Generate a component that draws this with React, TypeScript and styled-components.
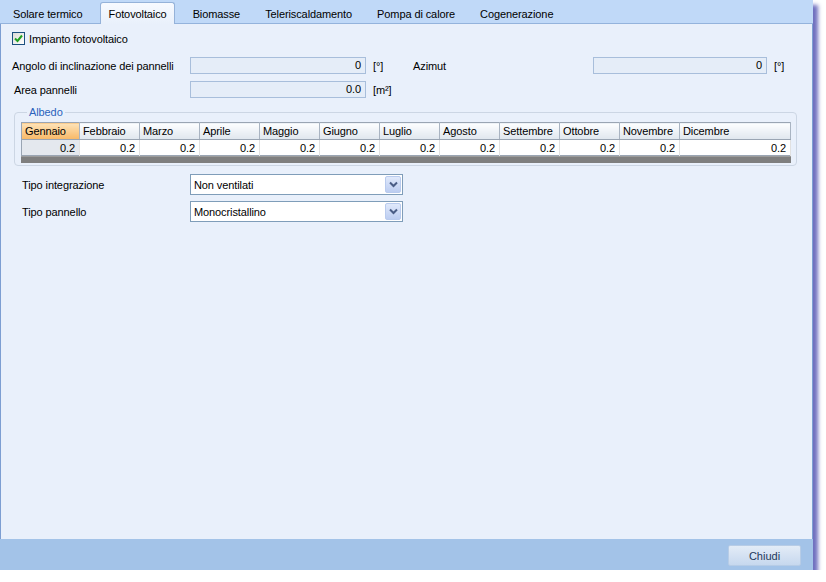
import React from "react";
import styled, { createGlobalStyle, css } from "styled-components";

const GlobalStyle = createGlobalStyle`
  body {
    margin: 0;
    background: #ffffff;
    font-family: "Liberation Sans", Arial, sans-serif;
    font-size: 11px;
    letter-spacing: -0.1px;
    color: #000;
  }
`;

const Window = styled.div`
  width: 813px;
  height: 570px;
  display: flex;
  flex-direction: column;
  box-shadow: 5px 5px 4px rgba(96, 96, 184, 0.9);
`;

const TabStrip = styled.div`
  height: 23px;
  display: flex;
  align-items: flex-end;
  background: #c0d9f8;
  border-bottom: 1px solid #94b3dc;
`;

const Tab = styled.div<{ $active?: boolean }>`
  height: 21px;
  padding: 0 12px 0 13px;
  display: flex;
  align-items: center;
  margin-bottom: -1px;
  white-space: nowrap;
  ${(p) =>
    p.$active &&
    css`
      margin: 0 5px -1px;
      padding: 0 7px 0 8px;
      background: linear-gradient(#f7faff, #e9f0fb);
      border: 1px solid #95b2d9;
      border-bottom: none;
      border-radius: 3px 3px 0 0;
    `}
`;

const Content = styled.div`
  flex: 1;
  background: #e9f0fb;
  border-left: 1px solid #7d9ed2;
  border-right: 1px solid #7d9ed2;
  padding-top: 8px;
  display: flex;
  flex-direction: column;
`;

const CheckRow = styled.label`
  display: flex;
  align-items: center;
  padding-left: 11px;
  height: 13px;
  gap: 4px;
`;

const CheckBox = styled.span`
  width: 11px;
  height: 11px;
  border: 1px solid #1c5180;
  background: linear-gradient(135deg, #dcdcd6, #ffffff);
  display: flex;
  align-items: center;
  justify-content: center;
`;

const FieldRow = styled.div<{ $top: number }>`
  display: flex;
  align-items: center;
  height: 17px;
  margin-top: ${(p) => p.$top}px;
  padding-left: 11px;
`;

const Label = styled.span<{ $w: number; $pad?: number }>`
  width: ${(p) => p.$w}px;
  padding-left: ${(p) => p.$pad || 0}px;
  box-sizing: border-box;
  white-space: nowrap;
`;

const NumInput = styled.div<{ $w: number }>`
  width: ${(p) => p.$w}px;
  height: 17px;
  box-sizing: border-box;
  border: 1px solid #a8bedb;
  background: #e5edf8;
  text-align: right;
  padding-right: 4px;
  line-height: 15px;
`;

const Unit = styled.span<{ $w?: number }>`
  width: ${(p) => p.$w || 40}px;
  padding-left: 7px;
  box-sizing: border-box;
`;

const Group = styled.fieldset`
  margin: 8px 16px 0 13px;
  padding: 3px 5px 2px 6px;
  border: 1px solid #ccd6e4;
  border-radius: 4px;
`;

const Legend = styled.legend`
  color: #2a62bb;
  padding: 0 2px;
  margin-left: 6px;
  line-height: 13px;
`;

const Grid = styled.table`
  width: 770px;
  table-layout: fixed;
  border-collapse: collapse;
  border: 1px solid #9aa5b3;
  background: #fff;
`;

const HeadCell = styled.th<{ $selected?: boolean }>`
  height: 17px;
  box-sizing: border-box;
  padding: 0 0 0 3px;
  font-weight: normal;
  text-align: left;
  white-space: nowrap;
  border-right: 1px solid #a9b4c2;
  border-bottom: 1px solid #9aa5b3;
  background: ${(p) =>
    p.$selected
      ? "linear-gradient(#fde3b8, #f8b866)"
      : "linear-gradient(#fdfeff, #dfe6ee)"};
`;

const DataCell = styled.td<{ $selected?: boolean }>`
  height: 16px;
  box-sizing: border-box;
  padding: 0 4px 0 0;
  text-align: right;
  border-right: 1px solid #e1e1e1;
  background: ${(p) => (p.$selected ? "#e4e8ee" : "#ffffff")};
`;

const GrayBar = styled.div`
  width: 770px;
  height: 7px;
  background: #7f7f7f;
  border-top: 1px solid #9c9c9c;
  box-sizing: border-box;
`;

const ComboRow = styled.div<{ $top: number }>`
  display: flex;
  align-items: center;
  margin-top: ${(p) => p.$top}px;
  padding-left: 21px;
`;

const Combo = styled.div`
  width: 213px;
  height: 21px;
  box-sizing: border-box;
  border: 1px solid #7f9db9;
  background: #fff;
  display: flex;
  align-items: center;
  justify-content: space-between;
  padding: 0 1px 0 3px;
`;

const ComboArrow = styled.span`
  width: 16px;
  height: 17px;
  box-sizing: border-box;
  border: 1px solid #b9cbee;
  border-radius: 2px;
  background: linear-gradient(#e0e9fb, #bccdf1);
  display: flex;
  align-items: center;
  justify-content: center;
`;

const Footer = styled.div`
  height: 31px;
  background: #a3c3e8;
  display: flex;
  justify-content: flex-end;
  align-items: flex-start;
  padding: 6px 12px 0 0;
  box-sizing: border-box;
`;

const Button = styled.button`
  width: 73px;
  height: 21px;
  border: 1px solid #b7cce6;
  border-radius: 2px;
  background: linear-gradient(#e3ecf7, #c7d8ee);
  color: #1e395b;
  font-family: "Liberation Sans", Arial, sans-serif;
  font-size: 11px;
  padding: 0;
`;

const months = [
  "Gennaio",
  "Febbraio",
  "Marzo",
  "Aprile",
  "Maggio",
  "Giugno",
  "Luglio",
  "Agosto",
  "Settembre",
  "Ottobre",
  "Novembre",
  "Dicembre",
];

const tabs = [
  "Solare termico",
  "Fotovoltaico",
  "Biomasse",
  "Teleriscaldamento",
  "Pompa di calore",
  "Cogenerazione",
];

function Chevron() {
  return (
    <svg width="9" height="7" viewBox="0 0 9 7">
      <path d="M1 1.5 L4.5 5 L8 1.5" stroke="#4a5d86" strokeWidth="2" fill="none" />
    </svg>
  );
}

export default function App() {
  return (
    <>
      <GlobalStyle />
      <Window>
        <TabStrip>
          {tabs.map((t) => (
            <Tab key={t} $active={t === "Fotovoltaico"}>
              {t}
            </Tab>
          ))}
        </TabStrip>
        <Content>
          <CheckRow>
            <CheckBox>
              <svg width="9" height="9" viewBox="0 0 9 9">
                <path d="M1 4.5 L3.5 7 L8 1.5" stroke="#21a121" strokeWidth="2" fill="none" />
              </svg>
            </CheckBox>
            Impianto fotovoltaico
          </CheckRow>
          <FieldRow $top={12}>
            <Label $w={178}>Angolo di inclinazione dei pannelli</Label>
            <NumInput $w={176}>0</NumInput>
            <Unit $w={47}>[°]</Unit>
            <Label $w={180}>Azimut</Label>
            <NumInput $w={174}>0</NumInput>
            <Unit>[°]</Unit>
          </FieldRow>
          <FieldRow $top={7}>
            <Label $w={178} $pad={2}>
              Area pannelli
            </Label>
            <NumInput $w={176}>0.0</NumInput>
            <Unit>[m²]</Unit>
          </FieldRow>
          <Group>
            <Legend>Albedo</Legend>
            <Grid>
              <colgroup>
                {months.map((m, i) => (
                  <col key={m} style={{ width: i === 0 ? 58 : i === 11 ? 111 : 60 }} />
                ))}
              </colgroup>
              <thead>
                <tr>
                  {months.map((m, i) => (
                    <HeadCell key={m} $selected={i === 0}>
                      {m}
                    </HeadCell>
                  ))}
                </tr>
              </thead>
              <tbody>
                <tr>
                  {months.map((m, i) => (
                    <DataCell key={m} $selected={i === 0}>
                      0.2
                    </DataCell>
                  ))}
                </tr>
              </tbody>
            </Grid>
            <GrayBar />
          </Group>
          <ComboRow $top={8}>
            <Label $w={168}>Tipo integrazione</Label>
            <Combo>
              Non ventilati
              <ComboArrow>
                <Chevron />
              </ComboArrow>
            </Combo>
          </ComboRow>
          <ComboRow $top={6}>
            <Label $w={168}>Tipo pannello</Label>
            <Combo>
              Monocristallino
              <ComboArrow>
                <Chevron />
              </ComboArrow>
            </Combo>
          </ComboRow>
        </Content>
        <Footer>
          <Button>Chiudi</Button>
        </Footer>
      </Window>
    </>
  );
}
